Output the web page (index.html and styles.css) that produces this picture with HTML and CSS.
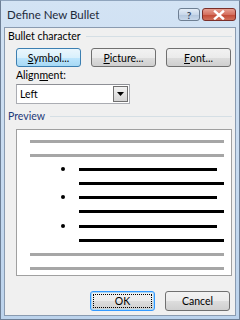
FILE: index.html
```html
<!DOCTYPE html>
<html>
<head>
<meta charset="utf-8">
<link rel="stylesheet" href="styles.css">
</head>
<body>
<div class="window">
  <div class="titlebar">
    <span class="title">Define New Bullet</span>
    <div class="caption-btns">
      <div class="cbtn help">?</div>
      <div class="cbtn close">
        <svg width="12" height="10" viewBox="0 0 12 10"><path d="M2 1.5 L10 8.5 M10 1.5 L2 8.5" stroke="#fff" stroke-width="2.4" stroke-linecap="square"/></svg>
      </div>
    </div>
  </div>
  <div class="client">
    <div class="group-label first"><span>Bullet character</span><div class="rule"></div></div>
    <div class="btn-row">
      <div class="btn hot"><u>S</u>ymbol...</div>
      <div class="btn"><u>P</u>icture...</div>
      <div class="btn"><u>F</u>ont...</div>
    </div>
    <div class="field-label">Align<u>m</u>ent:</div>
    <div class="combo">
      <span class="combo-text">Left</span>
      <div class="combo-arrow"><svg width="7" height="4" viewBox="0 0 7 4"><path d="M0 0 H7 L3.5 4 Z" fill="#000"/></svg></div>
    </div>
    <div class="group-label preview-label"><span>Preview</span><div class="rule"></div></div>
    <div class="preview">
      <div class="pline gray"></div>
      <div class="pline gray"></div>
      <div class="brow"><span class="dot"></span><div class="pline black short"></div></div>
      <div class="brow"><span class="nodot"></span><div class="pline black"></div></div>
      <div class="brow"><span class="dot"></span><div class="pline black short"></div></div>
      <div class="brow"><span class="nodot"></span><div class="pline black"></div></div>
      <div class="brow shift"><span class="dot"></span><div class="pline black short"></div></div>
      <div class="brow"><span class="nodot"></span><div class="pline black"></div></div>
      <div class="pline gray"></div>
      <div class="pline gray"></div>
    </div>
    <div class="bottom-row">
      <div class="btn default"><span class="focus">OK</span></div>
      <div class="btn">Cancel</div>
    </div>
  </div>
</div>
</body>
</html>
```
FILE: styles.css
```css
html, body {
  margin: 0;
  padding: 0;
  background: #ffffff;
}
body {
  font-family: Lato, "Noto Sans", sans-serif;
  font-size: 10.5px;
  color: #000;
}
.window {
  width: 240px;
  height: 320px;
  box-sizing: border-box;
  background: linear-gradient(#d3e3f4, #bcd3ec);
  border: 1px solid #6d7f96;
  border-top-color: #8fa4bd;
  padding: 0 3px 3px 3px;
  display: flex;
  flex-direction: column;
}
.titlebar {
  height: 26px;
  display: flex;
  align-items: center;
  justify-content: space-between;
  flex-shrink: 0;
}
.title {
  font-size: 11.5px;
  color: #1e2a3a;
  padding-left: 3px;
  margin-top: 1px;
}
.caption-btns {
  display: flex;
  gap: 2px;
  align-self: flex-start;
  margin-top: 7px;
}
.cbtn {
  height: 13px;
  box-sizing: border-box;
  border: 1px solid #6e7f93;
  border-radius: 3px;
  display: flex;
  align-items: center;
  justify-content: center;
}
.help {
  width: 22px;
  background: linear-gradient(#e4edf7 0%, #c9d8ea 50%, #b3c6dd 51%, #c8d8ea 100%);
  color: #3a4a5e;
  font-size: 10px;
  font-weight: bold;
  line-height: 1;
}
.close {
  width: 34px;
  border-color: #7a2f2a;
  background: linear-gradient(#e8a093 0%, #d5705f 50%, #c24733 51%, #d0705a 100%);
}
.client {
  flex: 1;
  background: #f0f0f0;
  border: 1px solid #8a9bb0;
  display: flex;
  flex-direction: column;
}
.group-label {
  display: flex;
  align-items: center;
  padding-left: 3px;
  padding-right: 3px;
  height: 14px;
  line-height: 14px;
}
.group-label span {
  color: #1d3a7a;
  white-space: nowrap;
}
.group-label.first span { color: #000; }
.group-label.first { margin-top: 1px; }
.rule {
  flex: 1;
  height: 1px;
  background: #d5dfe5;
  margin-left: 5px;
}
.btn-row {
  display: flex;
  gap: 10px;
  margin-top: 5px;
  margin-left: 11px;
}
.btn {
  width: 65px;
  height: 19px;
  box-sizing: border-box;
  border: 1px solid #707070;
  border-radius: 3px;
  background: linear-gradient(#f2f2f2 0%, #ebebeb 50%, #dddddd 51%, #cfcfcf 100%);
  display: flex;
  align-items: center;
  justify-content: center;
  color: #000;
}
.btn.hot {
  border-color: #3c7fb1;
  background: linear-gradient(#eaf6fd 0%, #d9f0fc 50%, #bee6fd 51%, #a7d9f5 100%);
}
.field-label {
  margin-top: 1px;
  margin-left: 11px;
  height: 14px;
  line-height: 14px;
}
.combo {
  margin-top: 2px;
  margin-left: 11px;
  width: 114px;
  height: 20px;
  box-sizing: border-box;
  border: 1px solid #abadb3;
  border-top-color: #8e9096;
  background: #fff;
  display: flex;
  align-items: center;
  justify-content: space-between;
  padding: 1px;
}
.combo-text {
  padding-left: 2px;
}
.combo-arrow {
  width: 15px;
  height: 16px;
  box-sizing: border-box;
  border: 1px solid #707070;
  background: linear-gradient(#f2f2f2, #d4d4d4);
  display: flex;
  align-items: center;
  justify-content: center;
}
.preview-label {
  margin-top: 5px;
}
.preview {
  margin-top: 6px;
  margin-left: 11px;
  width: 216px;
  height: 147px;
  box-sizing: border-box;
  background: #fff;
  border: 1px solid #a0a0a0;
  padding: 10px 6px 0 13px;
  display: flex;
  flex-direction: column;
  gap: 11px;
}
.pline {
  height: 3px;
  flex-shrink: 0;
}
.pline.gray {
  background: #a6a6a6;
  width: 194px;
}
.pline.black {
  background: #000;
  width: 145px;
}
.pline.black.short {
  width: 138px;
}
.brow {
  display: flex;
  align-items: center;
  height: 3px;
}
.brow.shift { margin-top: 1px; }
.dot, .nodot {
  width: 49px;
  flex-shrink: 0;
  position: relative;
  height: 3px;
}
.dot::after {
  content: "";
  position: absolute;
  left: 31px;
  top: -1px;
  width: 4px;
  height: 4px;
  border-radius: 50%;
  background: #000;
}
.bottom-row {
  display: flex;
  justify-content: flex-end;
  gap: 10px;
  margin-top: 15px;
  margin-right: 5px;
}
.bottom-row .btn {
  height: 20px;
}
.btn.default {
  border-color: #3399ff;
  box-shadow: inset 0 0 0 1px #a8d8f8;
  padding: 2px;
}
.focus {
  flex: 1;
  align-self: stretch;
  border: 1px dotted #000;
  display: flex;
  align-items: center;
  justify-content: center;
}
```
